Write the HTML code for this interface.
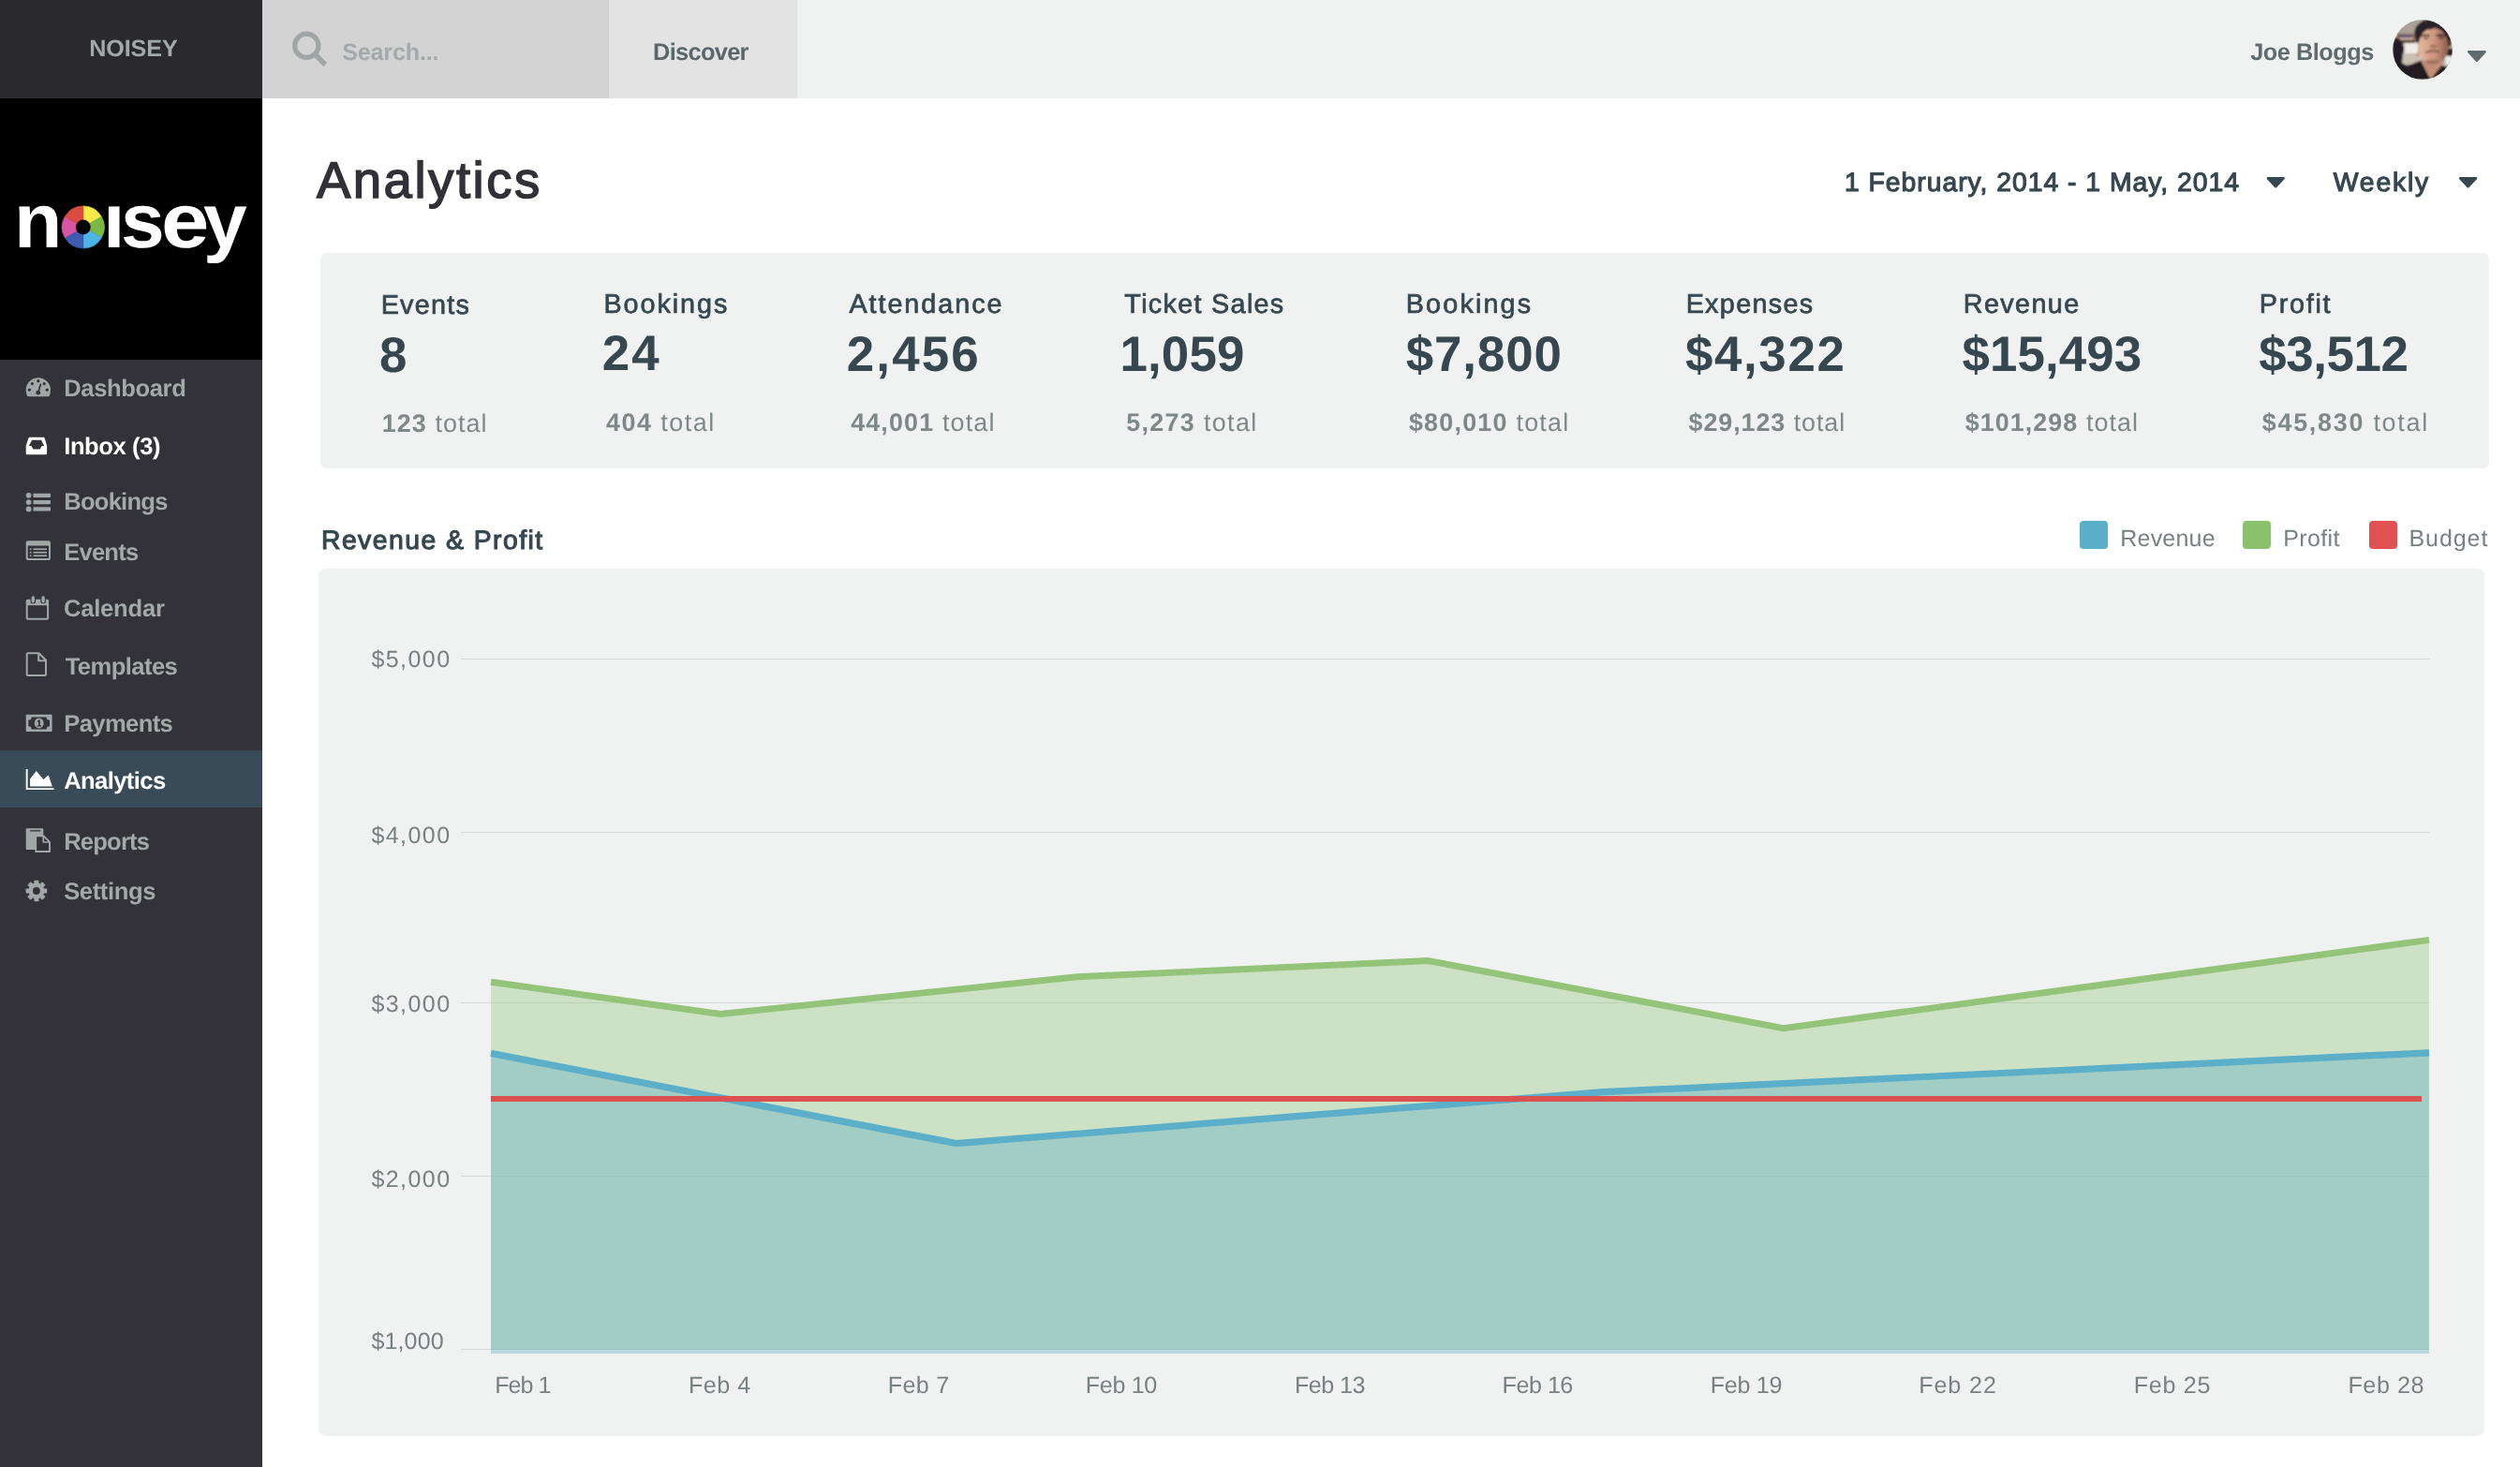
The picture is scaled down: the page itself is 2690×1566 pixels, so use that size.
<!DOCTYPE html>
<html lang="en">
<head>
<meta charset="utf-8">
<title>Noisey - Analytics</title>
<style>
html,body{margin:0;padding:0;}
html{background:#ffffff;overflow:hidden;}
body{width:2690px;height:1566px;position:relative;overflow:hidden;background:#ffffff;font-family:"Liberation Sans",sans-serif;transform-origin:0 0;}
.abs{position:absolute;}
.layer{position:absolute;left:0;top:0;width:2690px;height:1566px;will-change:transform;}
.t{position:absolute;white-space:pre;line-height:1;text-rendering:geometricPrecision;font-family:"Liberation Sans",sans-serif;}
.t b{font-weight:700;}
#sidebar{left:0;top:0;width:280px;height:1566px;background:#323238;}
#brand{left:0;top:0;width:280px;height:104.7px;background:#2a2a2d;}
#logobox{left:0;top:104.7px;width:280px;height:279.3px;background:#000000;}
#topbar{left:280px;top:0;width:2410px;height:104.7px;background:#f0f2f1;}
#search{left:280px;top:0;width:370.4px;height:104.7px;background:#d3d3d3;}
#discover{left:650.4px;top:0;width:201px;height:104.7px;background:#e3e3e3;}
#active{left:0;top:800.8px;width:280px;height:61px;background:#384b57;}
#stats{left:342px;top:270px;width:2315px;height:229.5px;background:#f0f2f1;border-radius:7px;}
#chartbox{left:340.4px;top:607px;width:2311.6px;height:926px;background:#f0f2f1;border-radius:8px;}
.sq{position:absolute;width:30px;height:30px;border-radius:4px;top:556.1px;}
</style>
</head>
<body>
<!-- backgrounds -->
<div id="sidebar" class="abs"></div>
<div id="brand" class="abs"></div>
<div id="logobox" class="abs"></div>
<div id="topbar" class="abs"></div>
<div id="search" class="abs"></div>
<div id="discover" class="abs"></div>
<div id="active" class="abs"></div>
<div id="stats" class="abs"></div>
<div id="chartbox" class="abs"></div>
<div class="sq" style="left:2220px;background:#5bafc8;"></div>
<div class="sq" style="left:2394px;background:#8bc16b;"></div>
<div class="sq" style="left:2528.5px;background:#e05252;"></div>
<!-- chart -->
<svg class="abs" style="left:0;top:0" width="2690" height="1566" viewBox="0 0 2690 1566">
<g fill="#d6d8d7" shape-rendering="crispEdges">
<rect x="492" y="703" width="2101" height="1"/>
<rect x="492" y="888" width="2101" height="1"/>
<rect x="492" y="1070" width="2101" height="1"/>
<rect x="492" y="1255" width="2101" height="1"/>
<rect x="492" y="1440" width="2101" height="1"/>
</g>
<polygon fill="#92c47c" fill-opacity="0.38" points="524,1048.3 769.2,1082.4 1149.6,1042.8 1524.4,1025.5 1903.8,1097.7 2593,1003.4 2593,1440.6 524,1440.6"/>
<polygon fill="#5aaec8" fill-opacity="0.38" points="524,1124.4 1020.4,1220.5 1712,1165.7 2593,1123.8 2593,1445 524,1445"/>
<polyline fill="none" stroke="#94c47a" stroke-width="7" stroke-linejoin="miter" points="524,1048.3 769.2,1082.4 1149.6,1042.8 1524.4,1025.5 1903.8,1097.7 2593,1003.4"/>
<polyline fill="none" stroke="#5cafc9" stroke-width="7.2" stroke-linejoin="miter" points="524,1124.4 1020.4,1220.5 1712,1165.7 2593,1123.8"/>
<rect x="524" y="1170" width="2061" height="6" fill="#dd5050"/>
</svg>

<!-- logo -->
<div id="logo" class="abs" style="left:0;top:0;"><span class="t" style="left:15.1px;top:195.4px;font-size:82.4px;font-weight:700;color:#ffffff;transform:scaleX(1.02);transform-origin:0 0;">n</span><span class="t" style="left:62.6px;top:195.4px;font-size:82.4px;font-weight:700;color:#000000;">o</span><span class="t" style="left:109.6px;top:195.4px;font-size:82.4px;font-weight:700;color:#ffffff;transform:scaleX(1.02);transform-origin:0 0;">ı</span><span class="t" style="left:128.7px;top:195.4px;font-size:82.4px;font-weight:700;color:#ffffff;transform:scaleX(1.02);transform-origin:0 0;">s</span><span class="t" style="left:172.0px;top:195.4px;font-size:82.4px;font-weight:700;color:#ffffff;transform:scaleX(1.12);transform-origin:0 0;">e</span><span class="t" style="left:216.5px;top:195.4px;font-size:82.4px;font-weight:700;color:#ffffff;transform:scaleX(1.02);transform-origin:0 0;">y</span></div>
<svg class="abs" style="left:0;top:105px" width="280" height="279" viewBox="0 105 280 279"><path fill="#f5e84a" stroke="#f5e84a" stroke-width="0.6" d="M88.80 242.50 L88.80 219.90 A22.60 22.60 0 0 1 108.37 231.20 Z"/><path fill="#79b843" stroke="#79b843" stroke-width="0.6" d="M88.80 242.50 L108.37 231.20 A22.60 22.60 0 0 1 108.37 253.80 Z"/><path fill="#4bb5e8" stroke="#4bb5e8" stroke-width="0.6" d="M88.80 242.50 L108.37 253.80 A22.60 22.60 0 0 1 88.80 265.10 Z"/><path fill="#3d5bb0" stroke="#3d5bb0" stroke-width="0.6" d="M88.80 242.50 L88.80 265.10 A22.60 22.60 0 0 1 69.23 253.80 Z"/><path fill="#d655a5" stroke="#d655a5" stroke-width="0.6" d="M88.80 242.50 L69.23 253.80 A22.60 22.60 0 0 1 69.23 231.20 Z"/><path fill="#dc4b40" stroke="#dc4b40" stroke-width="0.6" d="M88.80 242.50 L69.23 231.20 A22.60 22.60 0 0 1 88.80 219.90 Z"/><circle cx="88.8" cy="242.5" r="7.9" fill="#000"/></svg>

<!-- avatar -->
<svg class="abs" style="left:2554px;top:21px" width="64" height="64" viewBox="0 0 64 64">
<defs>
<clipPath id="avc"><circle cx="32" cy="32" r="31.8"/></clipPath>
<filter id="avb" x="-10%" y="-10%" width="120%" height="120%"><feGaussianBlur stdDeviation="1.0"/></filter>
<linearGradient id="avskin" gradientUnits="userSpaceOnUse" x1="27" y1="0" x2="60" y2="0"><stop offset="0" stop-color="#e6bba1"/><stop offset="0.5" stop-color="#cf9a80"/><stop offset="1" stop-color="#8a5a48"/></linearGradient>
</defs>
<g clip-path="url(#avc)">
<rect width="64" height="64" fill="#b3a99e"/>
<g filter="url(#avb)">
<rect x="0" y="0" width="30" height="16" fill="#aaa197"/>
<rect x="5" y="15" width="19" height="10" fill="#8a6652"/>
<rect x="7" y="16.6" width="13" height="2.2" fill="#4a5a8a"/>
<rect x="8" y="19.6" width="14" height="1.6" fill="#d8c8b8"/>
<rect x="9" y="22.4" width="15" height="2" fill="#3a3030"/>
<rect x="13" y="25" width="14" height="11" fill="#f1ece8"/>
<rect x="9" y="36" width="22" height="11" fill="#c9c0b3"/>
<rect x="25.8" y="35" width="1.8" height="4.2" fill="#e07a30"/>
<path d="M0 26 L3 19 L9 22 L12 30 L10 46 L16 50 L13 58 L0 58 Z" fill="#221a27"/>
<rect x="56" y="39" width="8" height="9" fill="#e6e9ee"/>
<ellipse cx="61" cy="35" rx="4.5" ry="4" fill="#2a2028"/>
<ellipse cx="42" cy="14" rx="18.5" ry="15" fill="#2b2029"/>
<path d="M24.5 8 L31 6 L30.5 16 L27.5 25.5 L25 24 L23.5 14 Z" fill="#2b2029"/>
<path d="M57 10 L62.5 20 L61.5 29 L58.5 28 Z" fill="#2b2029"/>
<ellipse cx="43.6" cy="28.5" rx="16" ry="19.8" fill="url(#avskin)"/>
<path d="M27 12 Q30 4 42 3 Q56 4 60 16 Q52 7.5 43 9.5 Q40 11.5 36 9.5 Q30 9 29 20 Z" fill="#2b2029"/>
<path d="M31 44 L52 43 L53 50 L40.5 64 L36 55 Z" fill="#c48e76"/>
<path d="M0 64 L0 52 L13 50.5 L30 43.5 L40.5 64 Z" fill="#241b24"/>
<path d="M52 49 L58 51 L64 44 L64 64 L40.5 64 Z" fill="#241b24"/>
<path d="M30.6 16.8 Q35 14.6 39.6 16.6 L39.6 18.2 Q35 16.8 30.6 18.6 Z" fill="#33242a"/>
<path d="M46.6 16.2 Q51.5 14.4 56.4 16.8 L56.4 18.4 Q51.5 16.6 46.6 18 Z" fill="#33242a"/>
<ellipse cx="35.6" cy="19.8" rx="2.8" ry="0.9" fill="#4a3434"/>
<ellipse cx="51.6" cy="19.6" rx="3" ry="0.9" fill="#4a3434"/>
<ellipse cx="43.4" cy="28.4" rx="3.6" ry="1.8" fill="#a87258"/>
<path d="M34.6 34.4 Q42 30.2 49.6 33.8 L49.4 35.4 Q42 33 34.8 35.8 Z" fill="#7b5242"/>
<ellipse cx="42.4" cy="37.6" rx="5" ry="2" fill="#d6908c"/>
<ellipse cx="43" cy="45" rx="8" ry="2.6" fill="#8d6353" opacity="0.6"/>
</g>
</g>
</svg>

<!-- icons -->
<svg class="abs" style="left:0;top:384px" width="280" height="640" viewBox="0 384 280 640">
<!-- dashboard -->
<g>
<path fill="#a1a7a7" d="M27.7 416.3 A13.15 13.15 0 0 1 54 416.3 Q54 420.5 52.4 423.2 L29.3 423.2 Q27.7 420.5 27.7 416.3 Z"/>
<g fill="#323238">
<circle cx="31.4" cy="416.2" r="1.6"/><circle cx="34.4" cy="409.6" r="1.6"/><circle cx="40.8" cy="406.7" r="1.6"/><circle cx="47.2" cy="409.6" r="1.6"/><circle cx="50.3" cy="416.2" r="1.6"/>
<circle cx="40.7" cy="419.2" r="2.4"/>
</g>
<line x1="40.7" y1="419.2" x2="43.3" y2="410.4" stroke="#323238" stroke-width="1.7" stroke-linecap="round"/>
</g>
<!-- inbox -->
<path fill="#ffffff" fill-rule="evenodd" d="M31.8 466.8 L46.3 466.8 Q47.3 466.8 47.7 467.8 L50.1 475.8 L50.1 484.2 Q50.1 485.2 49.1 485.2 L28.7 485.2 Q27.7 485.2 27.7 484.2 L27.7 475.8 L30.4 467.8 Q30.8 466.8 31.8 466.8 Z M34.1 469.7 L30.9 476.1 L33.5 476.1 L35.3 479.6 L42.8 479.6 L44.5 476.1 L47.1 476.1 L44 469.7 Z"/>
<!-- bookings list -->
<g fill="#a1a7a7">
<circle cx="30.6" cy="528.8" r="2.9"/><circle cx="30.6" cy="536.1" r="2.9"/><circle cx="30.6" cy="543.4" r="2.9"/>
<rect x="35.5" y="526.7" width="18.5" height="4.2" rx="0.6"/><rect x="35.5" y="534" width="18.5" height="4.2" rx="0.6"/><rect x="35.5" y="541.3" width="18.5" height="4.2" rx="0.6"/>
</g>
<!-- events list-alt -->
<g>
<rect x="27.7" y="577.2" width="26.3" height="20.8" rx="2.2" fill="#a1a7a7"/>
<rect x="29.7" y="582.4" width="22.3" height="13.6" rx="0.6" fill="#323238"/>
<g fill="#a1a7a7">
<rect x="31.8" y="585.4" width="1.7" height="1.7"/><rect x="31.8" y="588.9" width="1.7" height="1.7"/><rect x="31.8" y="592.4" width="1.7" height="1.7"/>
<rect x="35.5" y="585.4" width="14.5" height="1.7"/><rect x="35.5" y="588.9" width="14.5" height="1.7"/><rect x="35.5" y="592.4" width="14.5" height="1.7"/>
</g>
</g>
<!-- calendar -->
<g>
<rect x="27.7" y="639.7" width="24.4" height="22.1" rx="2" fill="#a1a7a7"/>
<rect x="29.7" y="646.2" width="20.4" height="13.6" rx="0.4" fill="#323238"/>
<rect x="32.5" y="635.4" width="5.6" height="8.9" rx="2.6" fill="#323238"/><rect x="43.3" y="635.4" width="5.6" height="8.9" rx="2.6" fill="#323238"/>
<rect x="33.6" y="636.3" width="3.4" height="7.1" rx="1.6" fill="#a1a7a7"/><rect x="44.4" y="636.3" width="3.4" height="7.1" rx="1.6" fill="#a1a7a7"/>
</g>
<!-- templates file-o -->
<g fill="none" stroke="#a1a7a7" stroke-width="2">
<path d="M29.7 697.3 L41.5 697.3 L49 704.8 L49 720 Q49 721 48 721 L29.7 721 Q28.7 721 28.7 720 L28.7 698.3 Q28.7 697.3 29.7 697.3 Z" stroke-linejoin="round"/>
<path d="M41.2 697.6 L41.2 705.2 L48.8 705.2"/>
</g>
<!-- payments money -->
<g>
<rect x="27.7" y="762.8" width="27.9" height="18.3" rx="0.8" fill="#a1a7a7"/>
<path fill="#323238" d="M33.6 765.5 L49.7 765.5 A3.3 3.3 0 0 0 53 768.8 L53 775.3 A3.3 3.3 0 0 0 49.7 778.6 L33.6 778.6 A3.3 3.3 0 0 0 30.3 775.3 L30.3 768.8 A3.3 3.3 0 0 0 33.6 765.5 Z"/>
<ellipse cx="41.7" cy="772" rx="5" ry="5.4" fill="#a1a7a7"/>
<path fill="#323238" d="M39.8 770 L41.6 768.2 L42.8 768.2 L42.8 774.2 L44 774.2 L44 775.5 L39.6 775.5 L39.6 774.2 L41 774.2 L41 770.5 L40.3 771 Z"/>
</g>
<!-- analytics area chart -->
<g fill="#ffffff">
<path d="M27.7 821.1 L29.6 821.1 L29.6 841.2 L57.6 841.2 L57.6 843.1 L27.7 843.1 Z"/>
<path d="M32.1 839.6 L32.1 831.5 L38.8 822.9 L46.3 832 L51.8 827.5 L55.8 839.6 Z"/>
</g>
<!-- reports -->
<g>
<path fill="#a1a7a7" d="M28.7 884.3 L45.3 884.3 Q46.3 884.3 46.3 885.3 L46.3 906.9 L28.7 906.9 Q27.7 906.9 27.7 905.9 L27.7 885.3 Q27.7 884.3 28.7 884.3 Z"/>
<rect x="32.1" y="886.2" width="11.3" height="1.3" fill="#323238"/>
<path fill="#323238" stroke="#a1a7a7" stroke-width="1.9" stroke-linejoin="round" d="M38.2 892.4 L46.6 892.4 L53 898.8 L53 909 L38.2 909 Z"/>
<path fill="none" stroke="#a1a7a7" stroke-width="1.7" d="M46.3 892.6 L46.3 899 L52.8 899"/>
</g>
<!-- settings cog -->
<g transform="translate(38.9 951)">
<g fill="#a1a7a7">
<circle r="8.4"/>
<rect x="-2.5" y="-11.3" width="5" height="22.6" rx="0.8"/>
<rect x="-2.5" y="-11.3" width="5" height="22.6" rx="0.8" transform="rotate(45)"/>
<rect x="-2.5" y="-11.3" width="5" height="22.6" rx="0.8" transform="rotate(90)"/>
<rect x="-2.5" y="-11.3" width="5" height="22.6" rx="0.8" transform="rotate(135)"/>
</g>
<circle r="3.9" fill="#323238"/>
</g>
</svg>
<svg class="abs" style="left:280px;top:0" width="2410" height="260" viewBox="280 0 2410 260">
<!-- search icon -->
<circle cx="327.3" cy="48.8" r="12.6" fill="none" stroke="#a0a6a6" stroke-width="5.2"/>
<line x1="336.5" y1="58.2" x2="347.3" y2="69" stroke="#a0a6a6" stroke-width="5.6" stroke-linecap="butt"/>
<!-- carets -->
<path fill="#5f6b6e" d="M2635 54 L2652.8 54 Q2654.6 54.4 2653.6 56 L2645 65.4 Q2643.9 66.4 2642.8 65.4 L2634.2 56 Q2633.2 54.4 2635 54 Z"/>
<path fill="#36474f" d="M2420.6 189 L2437.8 189 Q2439.6 189.4 2438.6 191 L2430.3 199.9 Q2429.2 200.9 2428.1 199.9 L2419.8 191 Q2418.8 189.4 2420.6 189 Z"/>
<path fill="#36474f" d="M2625.9 189 L2643.3 189 Q2645.1 189.4 2644.1 191 L2635.7 199.9 Q2634.6 200.9 2633.5 199.9 L2625.1 191 Q2624.1 189.4 2625.9 189 Z"/>
</svg>

<!-- top bar text -->
<header class="layer">
<span class="t" style="left:95.20px;top:40.00px;font-size:25.15px;letter-spacing:-0.103px;color:#a3a8a8;font-weight:700;">NOISEY</span>
<span class="t" style="left:365.18px;top:44.00px;font-size:25.15px;letter-spacing:-0.180px;color:#a4aaaa;font-weight:700;">Search...</span>
<span class="t" style="left:697.09px;top:44.00px;font-size:25.44px;letter-spacing:-0.718px;color:#5b676a;font-weight:700;">Discover</span>
<span class="t" style="left:2402.25px;top:44.00px;font-size:25.29px;letter-spacing:-0.459px;color:#5f6b6e;font-weight:700;">Joe Bloggs</span>
</header>
<!-- sidebar navigation -->
<nav class="layer">
<span class="t" style="left:68.20px;top:403.00px;font-size:25.58px;letter-spacing:-0.372px;color:#a3a8a8;font-weight:700;">Dashboard</span>
<span class="t" style="left:68.20px;top:465.00px;font-size:25.58px;letter-spacing:-0.410px;color:#ffffff;font-weight:700;">Inbox (3)</span>
<span class="t" style="left:68.20px;top:524.00px;font-size:25.58px;letter-spacing:-0.755px;color:#a3a8a8;font-weight:700;">Bookings</span>
<span class="t" style="left:68.20px;top:578.00px;font-size:25.58px;letter-spacing:-0.782px;color:#a3a8a8;font-weight:700;">Events</span>
<span class="t" style="left:68.00px;top:638.00px;font-size:25.58px;letter-spacing:-0.228px;color:#a3a8a8;font-weight:700;">Calendar</span>
<span class="t" style="left:69.64px;top:700.00px;font-size:25.58px;letter-spacing:-0.553px;color:#a3a8a8;font-weight:700;">Templates</span>
<span class="t" style="left:68.20px;top:761.00px;font-size:25.58px;letter-spacing:-0.602px;color:#a3a8a8;font-weight:700;">Payments</span>
<span class="t" style="left:68.18px;top:822.00px;font-size:25.58px;letter-spacing:-0.592px;color:#ffffff;font-weight:700;">Analytics</span>
<span class="t" style="left:68.20px;top:887.00px;font-size:25.58px;letter-spacing:-0.809px;color:#a3a8a8;font-weight:700;">Reports</span>
<span class="t" style="left:68.16px;top:940.00px;font-size:25.58px;letter-spacing:-0.385px;color:#a3a8a8;font-weight:700;">Settings</span>
</nav>
<!-- main content text -->
<main class="layer">
<div id="titlebar">
<span class="t" style="left:337.90px;top:166.00px;font-size:54.51px;letter-spacing:2.531px;color:#313137;-webkit-text-stroke:1.5px #313137;">Analytics</span>
<span class="t" style="left:1968.95px;top:181.00px;font-size:28.34px;letter-spacing:0.978px;color:#36474f;-webkit-text-stroke:1.1px #36474f;">1 February, 2014 - 1 May, 2014</span>
<span class="t" style="left:2490.81px;top:181.00px;font-size:28.34px;letter-spacing:1.823px;color:#36474f;-webkit-text-stroke:1.1px #36474f;">Weekly</span>
</div>
<section id="summary">
<span class="t" style="left:406.64px;top:312.00px;font-size:28.78px;letter-spacing:1.246px;color:#36474f;-webkit-text-stroke:0.7px #36474f;">Events</span>
<span class="t" style="left:405.09px;top:354.00px;font-size:52.91px;letter-spacing:1.559px;color:#36474f;font-weight:700;">8</span>
<span class="t" style="left:407.86px;top:439.00px;font-size:26.89px;letter-spacing:1.056px;color:#7f8888;"><b>123</b> total</span>
<span class="t" style="left:644.39px;top:311.00px;font-size:28.78px;letter-spacing:1.957px;color:#36474f;-webkit-text-stroke:0.7px #36474f;">Bookings</span>
<span class="t" style="left:642.80px;top:352.00px;font-size:52.91px;letter-spacing:2.015px;color:#36474f;font-weight:700;">24</span>
<span class="t" style="left:647.00px;top:438.00px;font-size:26.89px;letter-spacing:1.511px;color:#7f8888;"><b>404</b> total</span>
<span class="t" style="left:906.43px;top:311.00px;font-size:28.78px;letter-spacing:1.945px;color:#36474f;-webkit-text-stroke:0.7px #36474f;">Attendance</span>
<span class="t" style="left:903.80px;top:353.00px;font-size:52.91px;letter-spacing:2.129px;color:#36474f;font-weight:700;">2,456</span>
<span class="t" style="left:908.14px;top:438.00px;font-size:26.89px;letter-spacing:1.166px;color:#7f8888;"><b>44,001</b> total</span>
<span class="t" style="left:1200.36px;top:311.00px;font-size:28.78px;letter-spacing:1.300px;color:#36474f;-webkit-text-stroke:0.7px #36474f;">Ticket Sales</span>
<span class="t" style="left:1195.39px;top:353.00px;font-size:52.91px;letter-spacing:0.158px;color:#36474f;font-weight:700;">1,059</span>
<span class="t" style="left:1202.17px;top:438.00px;font-size:26.89px;letter-spacing:1.351px;color:#7f8888;"><b>5,273</b> total</span>
<span class="t" style="left:1500.75px;top:311.00px;font-size:28.78px;letter-spacing:2.150px;color:#36474f;-webkit-text-stroke:0.7px #36474f;">Bookings</span>
<span class="t" style="left:1500.75px;top:353.00px;font-size:52.91px;letter-spacing:0.885px;color:#36474f;font-weight:700;">$7,800</span>
<span class="t" style="left:1503.92px;top:438.00px;font-size:26.89px;letter-spacing:1.238px;color:#7f8888;"><b>$80,010</b> total</span>
<span class="t" style="left:1799.64px;top:311.00px;font-size:28.78px;letter-spacing:1.311px;color:#36474f;-webkit-text-stroke:0.7px #36474f;">Expenses</span>
<span class="t" style="left:1798.95px;top:353.00px;font-size:52.91px;letter-spacing:1.623px;color:#36474f;font-weight:700;">$4,322</span>
<span class="t" style="left:1802.52px;top:438.00px;font-size:26.89px;letter-spacing:0.937px;color:#7f8888;"><b>$29,123</b> total</span>
<span class="t" style="left:2095.79px;top:311.00px;font-size:28.78px;letter-spacing:1.381px;color:#36474f;-webkit-text-stroke:0.7px #36474f;">Revenue</span>
<span class="t" style="left:2094.54px;top:353.00px;font-size:52.91px;letter-spacing:0.087px;color:#36474f;font-weight:700;">$15,493</span>
<span class="t" style="left:2097.69px;top:438.00px;font-size:26.89px;letter-spacing:1.077px;color:#7f8888;"><b>$101,298</b> total</span>
<span class="t" style="left:2411.75px;top:311.00px;font-size:28.78px;letter-spacing:1.728px;color:#36474f;-webkit-text-stroke:0.7px #36474f;">Profit</span>
<span class="t" style="left:2411.21px;top:353.00px;font-size:52.91px;letter-spacing:-0.408px;color:#36474f;font-weight:700;">$3,512</span>
<span class="t" style="left:2414.79px;top:438.00px;font-size:26.89px;letter-spacing:1.749px;color:#7f8888;"><b>$45,830</b> total</span>
</section>
<section id="revenue-profit">
<span class="t" style="left:342.97px;top:563.00px;font-size:28.34px;letter-spacing:1.471px;color:#36474f;-webkit-text-stroke:1.1px #36474f;">Revenue &amp; Profit</span>
<span class="t" style="left:2263.25px;top:563.00px;font-size:25.00px;letter-spacing:0.219px;color:#788181;">Revenue</span>
<span class="t" style="left:2437.25px;top:563.00px;font-size:25.00px;letter-spacing:0.349px;color:#788181;">Profit</span>
<span class="t" style="left:2571.50px;top:563.00px;font-size:25.00px;letter-spacing:0.927px;color:#788181;">Budget</span>
<span class="t" style="left:396.45px;top:692.00px;font-size:25.00px;letter-spacing:1.439px;color:#788181;">$5,000</span>
<span class="t" style="left:396.45px;top:880.00px;font-size:25.00px;letter-spacing:1.439px;color:#788181;">$4,000</span>
<span class="t" style="left:396.45px;top:1060.00px;font-size:25.00px;letter-spacing:1.439px;color:#788181;">$3,000</span>
<span class="t" style="left:396.45px;top:1247.00px;font-size:25.00px;letter-spacing:1.439px;color:#788181;">$2,000</span>
<span class="t" style="left:396.45px;top:1420.00px;font-size:25.00px;letter-spacing:0.135px;color:#788181;">$1,000</span>
<span class="t" style="left:528.23px;top:1467.00px;font-size:25.15px;letter-spacing:-1.017px;color:#788181;">Feb 1</span>
<span class="t" style="left:735.00px;top:1467.00px;font-size:25.15px;letter-spacing:0.490px;color:#788181;">Feb 4</span>
<span class="t" style="left:947.86px;top:1467.00px;font-size:25.15px;letter-spacing:0.244px;color:#788181;">Feb 7</span>
<span class="t" style="left:1158.79px;top:1467.00px;font-size:25.15px;letter-spacing:-0.345px;color:#788181;">Feb 10</span>
<span class="t" style="left:1382.00px;top:1467.00px;font-size:25.15px;letter-spacing:-0.580px;color:#788181;">Feb 13</span>
<span class="t" style="left:1603.61px;top:1467.00px;font-size:25.15px;letter-spacing:-0.510px;color:#788181;">Feb 16</span>
<span class="t" style="left:1825.76px;top:1467.00px;font-size:25.15px;letter-spacing:-0.332px;color:#788181;">Feb 19</span>
<span class="t" style="left:2048.22px;top:1467.00px;font-size:25.15px;letter-spacing:0.892px;color:#788181;">Feb 22</span>
<span class="t" style="left:2277.63px;top:1467.00px;font-size:25.15px;letter-spacing:0.721px;color:#788181;">Feb 25</span>
<span class="t" style="left:2506.40px;top:1467.00px;font-size:25.15px;letter-spacing:0.584px;color:#788181;">Feb 28</span>
</section>
</main>
<script>
(function(){var w=window.innerWidth||2690;if(Math.abs(w-2690)>2){document.body.style.transform='scale('+(w/2690)+')';}})();
</script>
</body>
</html>
